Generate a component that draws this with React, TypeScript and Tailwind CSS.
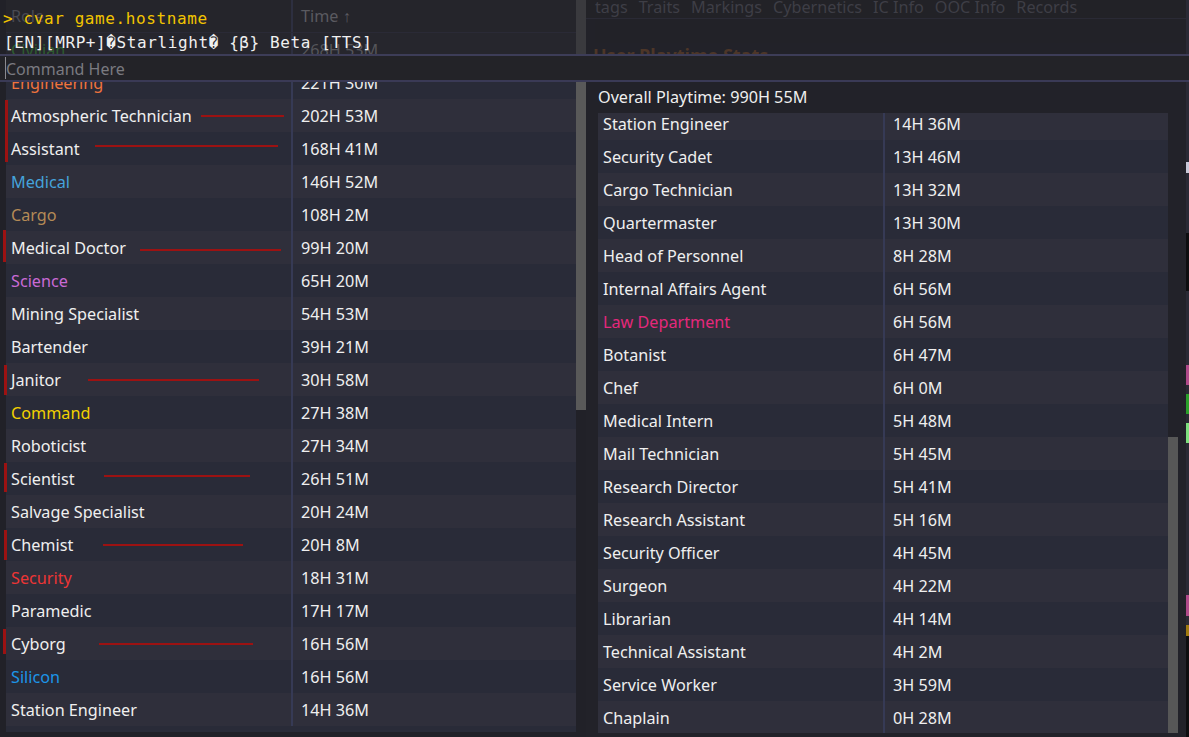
import clsx from 'clsx';

type Row = {
  role: string;
  time: string;
  color?: string;
  strike?: [number, number, number];
  bar?: [number, number, number];
};

// left table, first entry sits under the console overlay
const leftRows: Row[] = [
  { role: 'Civilian', time: '268H 53M', color: 'text-[#2e5c30]' },
  { role: 'Engineering', time: '221H 30M', color: 'text-[#f0743e]' },
  { role: 'Atmospheric Technician', time: '202H 53M', strike: [195, 278, 16], bar: [-1, 1, 33] },
  { role: 'Assistant', time: '168H 41M', strike: [89, 272, 13], bar: [-1, 0, 30] },
  { role: 'Medical', time: '146H 52M', color: 'text-[#45a3dc]' },
  { role: 'Cargo', time: '108H 2M', color: 'text-[#b48a56]' },
  { role: 'Medical Doctor', time: '99H 20M', strike: [134, 275, 18], bar: [-3, -1, 32] },
  { role: 'Science', time: '65H 20M', color: 'text-[#c96ad6]' },
  { role: 'Mining Specialist', time: '54H 53M' },
  { role: 'Bartender', time: '39H 21M' },
  { role: 'Janitor', time: '30H 58M', strike: [82, 253, 16], bar: [-2, 2, 30] },
  { role: 'Command', time: '27H 38M', color: 'text-[#f2d100]' },
  { role: 'Roboticist', time: '27H 34M' },
  { role: 'Scientist', time: '26H 51M', strike: [98, 244, 13], bar: [-2, 1, 29] },
  { role: 'Salvage Specialist', time: '20H 24M' },
  { role: 'Chemist', time: '20H 8M', strike: [97, 237, 16], bar: [-2, 2, 30] },
  { role: 'Security', time: '18H 31M', color: 'text-[#ec3535]' },
  { role: 'Paramedic', time: '17H 17M' },
  { role: 'Cyborg', time: '16H 56M', strike: [93, 247, 16], bar: [-3, 2, 25] },
  { role: 'Silicon', time: '16H 56M', color: 'text-[#1c95e8]' },
  { role: 'Station Engineer', time: '14H 36M' },
];

const rightRows: Row[] = [
  { role: 'Station Engineer', time: '14H 36M' },
  { role: 'Security Cadet', time: '13H 46M' },
  { role: 'Cargo Technician', time: '13H 32M' },
  { role: 'Quartermaster', time: '13H 30M' },
  { role: 'Head of Personnel', time: '8H 28M' },
  { role: 'Internal Affairs Agent', time: '6H 56M' },
  { role: 'Law Department', time: '6H 56M', color: 'text-[#e5287c]' },
  { role: 'Botanist', time: '6H 47M' },
  { role: 'Chef', time: '6H 0M' },
  { role: 'Medical Intern', time: '5H 48M' },
  { role: 'Mail Technician', time: '5H 45M' },
  { role: 'Research Director', time: '5H 41M' },
  { role: 'Research Assistant', time: '5H 16M' },
  { role: 'Security Officer', time: '4H 45M' },
  { role: 'Surgeon', time: '4H 22M' },
  { role: 'Librarian', time: '4H 14M' },
  { role: 'Technical Assistant', time: '4H 2M' },
  { role: 'Service Worker', time: '3H 59M' },
  { role: 'Chaplain', time: '0H 28M' },
];

function PlaytimeRow({ row, light, dim }: { row: Row; light: boolean; dim?: boolean }) {
  return (
    <div
      className={clsx(
        'relative flex h-[33px] shrink-0 items-center',
        dim ? 'bg-[#26262d]' : light ? 'bg-[#2f2f3b]' : 'bg-[#292b38]'
      )}
    >
      {row.bar && (
        <div
          className="absolute w-[3px] bg-[#9c1212]"
          style={{ left: row.bar[0], top: row.bar[1], height: row.bar[2] }}
        />
      )}
      <div className={clsx('w-[285px] truncate pl-[5px]', row.color ?? (dim ? 'text-[#56565c]' : 'text-[#efefef]'))}>
        {row.role}
      </div>
      <div
        className={clsx(
          'flex h-full flex-1 items-center border-l-2 pl-[8px]',
          dim ? 'border-[#2d2f40] text-[#55555a]' : 'border-[#363a55] text-[#efefef]'
        )}
      >
        {row.time}
      </div>
      {row.strike && (
        <div
          className="absolute h-[2px] bg-[#9c1212]"
          style={{ left: row.strike[0], width: row.strike[1] - row.strike[0], top: row.strike[2] }}
        />
      )}
    </div>
  );
}

const tabs = ['tags', 'Traits', 'Markings', 'Cybernetics', 'IC Info', 'OOC Info', 'Records'];

export default function App() {
  return (
    <div className="relative h-[737px] w-[1189px] overflow-hidden bg-[#222229] font-['Noto_Sans',sans-serif] text-[16.2px] leading-[22px]">
      <div className="flex h-full">
        {/* left list */}
        <div className="flex w-[586px] shrink-0 bg-[#212128] pl-[6px]">
          <div className="flex h-[732px] w-[570px] flex-col bg-[#292b38]">
            <div className="flex h-[33px] shrink-0 items-center border-b border-[#2a2a36] bg-[#25252b]">
              <div className="w-[285px] pl-[5px] text-[#4a4a52]">Role</div>
              <div className="flex h-full flex-1 items-center border-l-2 border-[#2d2f40] pl-[8px] text-[#5a5a60]">
                Time ↑
              </div>
            </div>
            {leftRows.map((r, i) => (
              <PlaytimeRow key={r.role + i} row={r} light={i % 2 === 0} dim={i === 0} />
            ))}
          </div>
          <div className="w-[10px] shrink-0">
            <div className="h-[54px] bg-[#3a3a3e]" />
            <div className="h-[356px] bg-[#595959]" />
          </div>
        </div>

        {/* right stats panel */}
        <div className="flex w-[600px] shrink-0 flex-col">
          <div className="flex h-[19px] shrink-0 gap-[11px] border-b border-[#2a2a35] bg-[#222227] pl-[9px] leading-[14px] text-[#3e3e46]">
            {tabs.map((t) => (
              <span key={t}>{t}</span>
            ))}
          </div>
          <div className="ml-[9px] h-[24px] shrink-0 bg-[#222228]" />
          <div className="h-[24px] shrink-0 pl-[7px] text-[18px] font-bold leading-[24px] text-[#4d3628]">
            User Playtime Stats
          </div>
          <div className="h-[19px] shrink-0" />
          <div className="h-[22px] shrink-0 pl-[12px] text-[#efefef]">Overall Playtime: 990H 55M</div>
          <div className="mt-[5px] flex pl-[12px]">
            <div className="flex h-[620px] w-[570px] flex-col overflow-hidden">
              <div className="mt-[-6px] flex flex-col">
                {rightRows.map((r, i) => (
                  <PlaytimeRow key={r.role} row={r} light={i % 2 === 0} />
                ))}
              </div>
            </div>
            <div className="flex w-[10px] flex-col justify-end">
              <div className="h-[296px] bg-[#575757]" />
            </div>
          </div>
        </div>

        {/* window edge behind */}
        <div className="flex w-[3px] shrink-0 flex-col bg-[#2a2a35]">
          <div className="h-[162px]" />
          <div className="h-[11px] bg-[#c8c8d8]" />
          <div className="h-[60px]" />
          <div className="h-[58px] bg-[#0e0e10]" />
          <div className="h-[74px]" />
          <div className="h-[20px] bg-[#b04a8a]" />
          <div className="h-[9px]" />
          <div className="h-[20px] bg-[#2aa02a]" />
          <div className="h-[9px]" />
          <div className="h-[20px] bg-[#7ee07e]" />
          <div className="h-[152px]" />
          <div className="h-[21px] bg-[#b04a8a]" />
          <div className="h-[9px]" />
          <div className="h-[11px] bg-[#a07a10]" />
          <div className="flex-1 bg-[#0e0e10]" />
        </div>
      </div>

      {/* console overlay */}
      <div className="absolute left-0 right-0 top-0 font-['DejaVu_Sans_Mono',monospace] text-[16px] tracking-[0.6px]">
        <div className="h-[30px] pl-[3px] pt-[8px] leading-[22px] text-[#f2c400]">
          <span>&gt; </span>cvar game.hostname
        </div>
        <div className="h-[24px] pl-[4px] leading-[26px] text-[#f0f0f0]">
          [EN][MRP+]�Starlight� {'{β}'} Beta [TTS]
        </div>
        <div className="flex h-[28px] items-center border-b-2 border-t-2 border-b-[#3a3a56] border-t-[#3d3d58] bg-[#232328] font-['Noto_Sans',sans-serif] tracking-normal">
          <div className="ml-[5px] h-[22px] w-px bg-[#8a8a90]" />
          <span className="pt-[2px] text-[#7a7a80]">Command Here</span>
        </div>
      </div>
    </div>
  );
}
